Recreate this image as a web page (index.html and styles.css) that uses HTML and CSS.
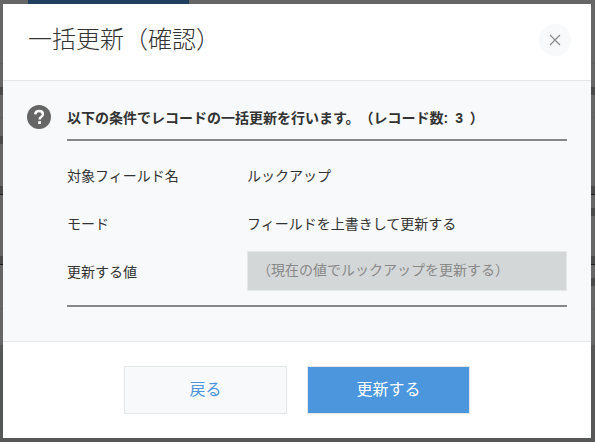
FILE: index.html
```html
<!DOCTYPE html>
<html lang="ja">
<head>
    <meta charset="UTF-8">
    <title>一括更新（確認）</title>
    <link rel="stylesheet" href="styles.css">
</head>
<body>
    <!-- 後ろのページ（オーバーレイで暗くなっている） -->
    <div class="page-behind">
        <div class="page-tabs"><div class="page-tab"></div></div>
        <div class="page-row page-row-head"><span class="mark"></span><span class="mark"></span></div>
        <div class="page-records">
            <div class="page-row page-row-note"><span class="mark"></span></div>
            <div class="page-record">
                <div class="page-row page-line"><span class="mark mark-link"></span><span class="mark mark-link"></span></div>
                <div class="page-row page-line"><span></span><span class="mark"></span></div>
            </div>
            <div class="page-record">
                <div class="page-row page-line"><span class="mark mark-link"></span><span class="mark mark-link"></span></div>
                <div class="page-row page-line"><span></span><span class="mark"></span></div>
            </div>
        </div>
        <div class="page-gap"></div>
        <div class="page-bottom"></div>
    </div>

    <div class="dialog">
        <div class="dialog-header">
            <h1>一括更新（確認）</h1>
            <button class="close-button" aria-label="閉じる">
                <svg width="12" height="12" viewBox="0 0 12 12"><path d="M1 1L11 11M11 1L1 11" stroke="#888" stroke-width="1.1" fill="none"/></svg>
            </button>
        </div>
        <div class="dialog-body">
            <div class="message">
                <svg class="question-icon" width="24" height="24" viewBox="0 0 24 24">
                    <circle cx="12" cy="12" r="12" fill="#666"/>
                    <path d="M8.2 9.4C8.4 7.2 10 6 12.1 6c2.2 0 3.8 1.3 3.8 3.2 0 1.5-.9 2.3-2 3-.9.6-1.2 1-1.2 2v.3" stroke="#fff" stroke-width="2.4" fill="none"/>
                    <rect x="11.2" y="16.2" width="2.8" height="2.8" fill="#fff"/>
                </svg>
                <p>以下の条件でレコードの一括更新を行います。（レコード数: 3 ）</p>
            </div>
            <div class="fields">
                <div class="field-row">
                    <div class="field-label">対象フィールド名</div>
                    <div class="field-value">ルックアップ</div>
                </div>
                <div class="field-row">
                    <div class="field-label">モード</div>
                    <div class="field-value">フィールドを上書きして更新する</div>
                </div>
                <div class="field-row">
                    <div class="field-label">更新する値</div>
                    <div class="value-box">（現在の値でルックアップを更新する）</div>
                </div>
            </div>
        </div>
        <div class="dialog-footer">
            <button class="btn btn-back">戻る</button>
            <button class="btn btn-submit">更新する</button>
        </div>
    </div>
</body>
</html>
```

FILE: styles.css
```css
* {
    box-sizing: border-box;
}

body {
    margin: 0;
    height: 442px;
    padding: 4px 4px 4px 3px;
    overflow: hidden;
    background-color: #666;
    color: #333;
    font-family: "Liberation Sans", "Noto Sans CJK JP", sans-serif;
    text-spacing-trim: space-all;
}

/* page behind the overlay */
.page-behind {
    position: absolute;
    top: 0;
    left: 0;
    width: 595px;
    height: 442px;
    display: flex;
    flex-direction: column;
    overflow: hidden;
}

.page-tabs {
    height: 64px;
    padding-left: 28px;
    border-bottom: 1px solid #5e5e5e;
}

.page-tab {
    width: 161px;
    height: 4px;
    background-color: #213f5e;
}

.page-row {
    display: flex;
    align-items: center;
    justify-content: space-between;
}

.page-row-head {
    height: 54px;
    border-bottom: 1px solid #5e5e5e;
}

.page-row-note {
    height: 44px;
}

.page-records {
    height: 191px;
    border-bottom: 1px solid #5e5e5e;
}

.page-record {
    height: 42px;
    margin-top: 18px;
}

.page-record + .page-record {
    margin-top: 28px;
}

.page-line {
    height: 21px;
}

.mark {
    width: 4px;
    height: 8px;
    background-color: #4a4a4a;
}

.mark-link {
    height: 9px;
    border-bottom: 1px solid #1c1c1c;
}

.page-gap {
    height: 36px;
}

.page-bottom {
    flex: 1;
    background-color: #565857;
}

/* dialog */
.dialog {
    position: relative;
    display: flex;
    flex-direction: column;
    height: 434px;
    background-color: #fff;
}

.dialog-header {
    display: flex;
    align-items: center;
    justify-content: space-between;
    height: 77px;
    padding: 0 20px 5px 25px;
    border-bottom: 1px solid #e3e7e8;
}

.dialog-header h1 {
    margin: 0 0 5px;
    font-size: 24px;
    font-weight: 300;
    color: #333;
}

.close-button {
    display: flex;
    align-items: center;
    justify-content: center;
    width: 32px;
    height: 32px;
    padding: 0;
    border: none;
    border-radius: 50%;
    background-color: #f7f9fa;
}

.dialog-body {
    flex: 1;
    padding: 23px 24px 0 24px;
    background-color: #f7f9fa;
}

.message {
    display: flex;
    align-items: flex-start;
    gap: 16px;
}

.question-icon {
    margin-top: 1px;
}

.message p {
    flex: 1;
    margin: 0;
    height: 37px;
    padding-top: 2px;
    font-size: 14px;
    font-weight: 700;
    line-height: 24px;
    word-spacing: 3px;
    border-bottom: 2px solid #888;
}

.fields {
    margin-left: 40px;
    padding: 10px 0 10px;
    border-bottom: 2px solid #888;
}

.field-row {
    display: flex;
    align-items: center;
    min-height: 48px;
    font-size: 14px;
}

.field-label {
    width: 180px;
}

.value-box {
    flex: 1;
    height: 40px;
    padding: 0 9px;
    border: 1px solid #e3e7e8;
    background-color: #d4d7d7;
    color: #888;
    line-height: 36px;
}

.dialog-footer {
    display: flex;
    justify-content: center;
    gap: 20px;
    height: 97px;
    padding-top: 24px;
    border-top: 1px solid #e3e7e8;
}

.btn {
    width: 163px;
    height: 48px;
    padding: 0 0 4px;
    border: 1px solid #e3e7e8;
    font-family: inherit;
    font-size: 16px;
}

.btn-back {
    background-color: #f7f9fa;
    color: #4b96dc;
}

.btn-submit {
    background-color: #4b96dc;
    color: #fff;
}
```
